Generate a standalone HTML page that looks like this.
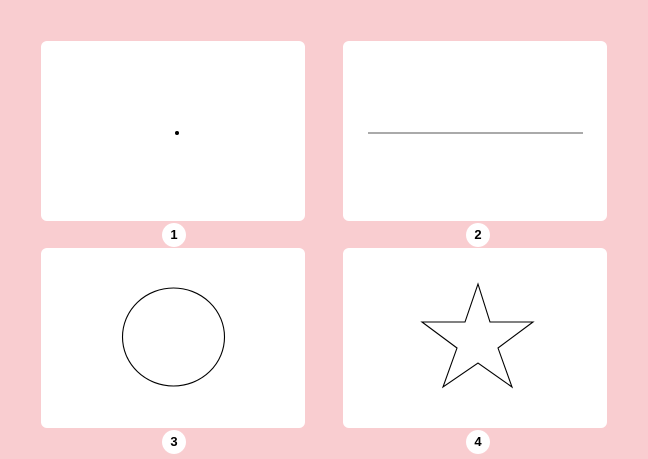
<!DOCTYPE html>
<html><head><style>
html,body{margin:0;padding:0;}
body{width:648px;height:459px;background:#f9cdd0;position:relative;overflow:hidden;font-family:"Liberation Sans",sans-serif;}
.c{position:absolute;background:#fff;border-radius:6px;width:264px;height:180px;}
.b{position:absolute;width:24px;height:24px;border-radius:50%;background:#fff;text-align:center;line-height:24px;font-size:13px;font-weight:bold;color:#000;}
svg{position:absolute;left:0;top:0;}
</style></head><body>
<div class="c" style="left:41px;top:41px"></div>
<div class="c" style="left:343px;top:41px"></div>
<div class="c" style="left:41px;top:248px"></div>
<div class="c" style="left:343px;top:248px"></div>
<div class="b" style="left:162px;top:223px">1</div>
<div class="b" style="left:466px;top:223px">2</div>
<div class="b" style="left:162px;top:430px">3</div>
<div class="b" style="left:466px;top:430px">4</div>
<svg width="648" height="459">
<circle cx="177" cy="133" r="2" fill="#000"/>
<line x1="368" y1="133" x2="583" y2="133" stroke="#777" stroke-width="1.2"/>
<ellipse cx="173.5" cy="337" rx="51" ry="49" fill="none" stroke="#000" stroke-width="1.1"/>
<polygon points="478,284 490,322 533,322 498,348 512,387 478,363 443,387 457,348 422,322 465,322" fill="none" stroke="#000" stroke-width="1.1" stroke-linejoin="miter"/>
</svg>
</body></html>
